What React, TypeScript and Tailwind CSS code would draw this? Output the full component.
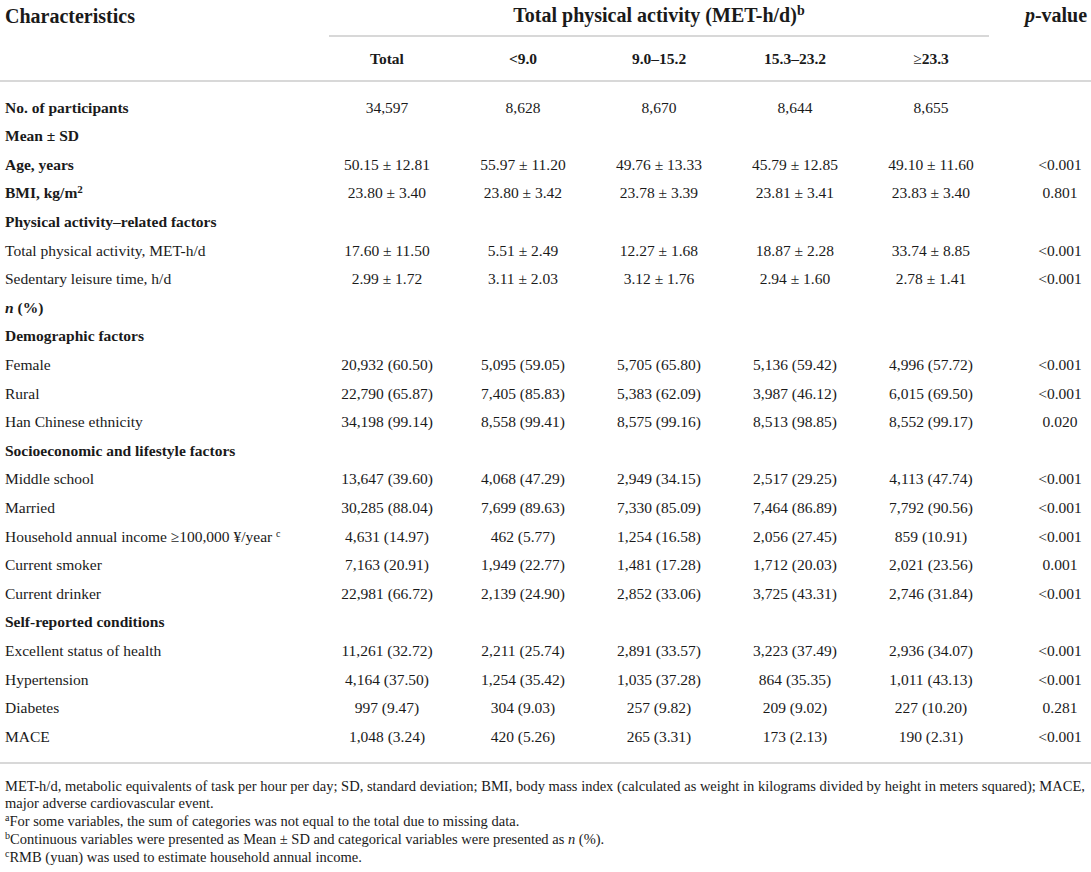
type Row = {
  label: React.ReactNode;
  values?: string[];
  p?: string;
  bold?: boolean;
};

const rows: Row[] = [
  { label: "No. of participants", values: ["34,597", "8,628", "8,670", "8,644", "8,655"], bold: true },
  { label: "Mean ± SD", bold: true },
  { label: "Age, years", values: ["50.15 ± 12.81", "55.97 ± 11.20", "49.76 ± 13.33", "45.79 ± 12.85", "49.10 ± 11.60"], p: "<0.001", bold: true },
  {
    label: (
      <>
        BMI, kg/m<sup className="text-[11px]">2</sup>
      </>
    ),
    values: ["23.80 ± 3.40", "23.80 ± 3.42", "23.78 ± 3.39", "23.81 ± 3.41", "23.83 ± 3.40"],
    p: "0.801",
    bold: true,
  },
  { label: "Physical activity–related factors", bold: true },
  { label: "Total physical activity, MET-h/d", values: ["17.60 ± 11.50", "5.51 ± 2.49", "12.27 ± 1.68", "18.87 ± 2.28", "33.74 ± 8.85"], p: "<0.001" },
  { label: "Sedentary leisure time, h/d", values: ["2.99 ± 1.72", "3.11 ± 2.03", "3.12 ± 1.76", "2.94 ± 1.60", "2.78 ± 1.41"], p: "<0.001" },
  {
    label: (
      <>
        <i>n</i> (%)
      </>
    ),
    bold: true,
  },
  { label: "Demographic factors", bold: true },
  { label: "Female", values: ["20,932 (60.50)", "5,095 (59.05)", "5,705 (65.80)", "5,136 (59.42)", "4,996 (57.72)"], p: "<0.001" },
  { label: "Rural", values: ["22,790 (65.87)", "7,405 (85.83)", "5,383 (62.09)", "3,987 (46.12)", "6,015 (69.50)"], p: "<0.001" },
  { label: "Han Chinese ethnicity", values: ["34,198 (99.14)", "8,558 (99.41)", "8,575 (99.16)", "8,513 (98.85)", "8,552 (99.17)"], p: "0.020" },
  { label: "Socioeconomic and lifestyle factors", bold: true },
  { label: "Middle school", values: ["13,647 (39.60)", "4,068 (47.29)", "2,949 (34.15)", "2,517 (29.25)", "4,113 (47.74)"], p: "<0.001" },
  { label: "Married", values: ["30,285 (88.04)", "7,699 (89.63)", "7,330 (85.09)", "7,464 (86.89)", "7,792 (90.56)"], p: "<0.001" },
  {
    label: (
      <>
        Household annual income ≥100,000 ¥/year <sup className="text-[10px]">c</sup>
      </>
    ),
    values: ["4,631 (14.97)", "462 (5.77)", "1,254 (16.58)", "2,056 (27.45)", "859 (10.91)"],
    p: "<0.001",
  },
  { label: "Current smoker", values: ["7,163 (20.91)", "1,949 (22.77)", "1,481 (17.28)", "1,712 (20.03)", "2,021 (23.56)"], p: "0.001" },
  { label: "Current drinker", values: ["22,981 (66.72)", "2,139 (24.90)", "2,852 (33.06)", "3,725 (43.31)", "2,746 (31.84)"], p: "<0.001" },
  { label: "Self-reported conditions", bold: true },
  { label: "Excellent status of health", values: ["11,261 (32.72)", "2,211 (25.74)", "2,891 (33.57)", "3,223 (37.49)", "2,936 (34.07)"], p: "<0.001" },
  { label: "Hypertension", values: ["4,164 (37.50)", "1,254 (35.42)", "1,035 (37.28)", "864 (35.35)", "1,011 (43.13)"], p: "<0.001" },
  { label: "Diabetes", values: ["997 (9.47)", "304 (9.03)", "257 (9.82)", "209 (9.02)", "227 (10.20)"], p: "0.281" },
  { label: "MACE", values: ["1,048 (3.24)", "420 (5.26)", "265 (3.31)", "173 (2.13)", "190 (2.31)"], p: "<0.001" },
];

const groups = ["Total", "<9.0", "9.0–15.2", "15.3–23.2"];

export default function App() {
  return (
    <div className="w-[1091px] bg-white text-[#1a1a1a] font-['Liberation_Serif',serif]">
      <div className="grid grid-cols-[319px_repeat(5,136px)_92px]">
        {/* top header */}
        <div className="pl-[5px] pt-[4px] text-[20px] font-bold leading-[24px]">Characteristics</div>
        <div className="col-span-5 flex flex-col px-[10px]">
          <div className="h-[35px] pt-[3px] text-center text-[20px] font-bold leading-[24px]">
            Total physical activity (MET-h/d)<sup className="text-[14px]">b</sup>
          </div>
          <div className="h-[2px] bg-[#d8d8d8]" />
        </div>
        <div className="pl-[22px] pt-[3px] text-center text-[20px] font-bold leading-[24px]">
          <i>p</i>-value
        </div>

        {/* sub header */}
        <div className="col-span-7 grid grid-cols-[319px_repeat(5,136px)_92px] h-[45px] items-center border-b-2 border-[#d8d8d8] text-[15.5px] font-bold">
          <div />
          {groups.map((g) => (
            <div key={g} className="text-center">
              {g}
            </div>
          ))}
          <div className="text-center">
            <span className="font-normal">≥</span>23.3
          </div>
          <div />
        </div>
      </div>

      <div className="pt-[11px] pb-[11px] border-b-2 border-[#d8d8d8]">
        {rows.map((r, i) => (
          <div key={i} className="grid grid-cols-[319px_repeat(5,136px)_92px] h-[28.6px] items-center text-[15.5px]">
            <div className={`pl-[5px] ${r.bold ? "font-bold" : ""}`}>{r.label}</div>
            {(r.values ?? ["", "", "", "", ""]).map((v, j) => (
              <div key={j} className="text-center">
                {v}
              </div>
            ))}
            <div className="pl-[30px] text-center">{r.p ?? ""}</div>
          </div>
        ))}
      </div>

      <div className="px-[5px] pt-[14px] text-[14.5px] leading-[17.8px]">
        <p>
          MET-h/d, metabolic equivalents of task per hour per day; SD, standard deviation; BMI, body mass index (calculated as weight in kilograms divided by height in meters squared); MACE,
          <br />
          major adverse cardiovascular event.
        </p>
        <p>
          <sup className="text-[10px]">a</sup>For some variables, the sum of categories was not equal to the total due to missing data.
        </p>
        <p>
          <sup className="text-[10px]">b</sup>Continuous variables were presented as Mean ± SD and categorical variables were presented as <i>n</i> (%).
        </p>
        <p>
          <sup className="text-[10px]">c</sup>RMB (yuan) was used to estimate household annual income.
        </p>
      </div>
    </div>
  );
}
